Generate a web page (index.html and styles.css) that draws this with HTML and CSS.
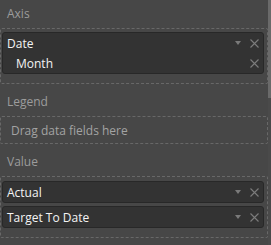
FILE: index.html
```html
<!DOCTYPE html>
<html>
<head>
<meta charset="utf-8">
<link rel="stylesheet" href="styles.css">
</head>
<body>
<div class="pane">
  <div class="wells">
    <section class="well">
      <div class="well-label">Axis</div>
      <div class="drop drop-axis">
        <div class="card">
          <div class="row">
            <span class="name">Date</span>
            <span class="caret"></span>
            <svg class="x" viewBox="0 0 9 9" width="9" height="9"><path d="M0.5 0.5L8.5 8.5M8.5 0.5L0.5 8.5"/></svg>
          </div>
          <div class="row sub">
            <span class="name">Month</span>
            <svg class="x" viewBox="0 0 9 9" width="9" height="9"><path d="M0.5 0.5L8.5 8.5M8.5 0.5L0.5 8.5"/></svg>
          </div>
        </div>
      </div>
    </section>
    <section class="well">
      <div class="well-label">Legend</div>
      <div class="drop drop-empty">
        <span class="hint">Drag data fields here</span>
      </div>
    </section>
    <section class="well">
      <div class="well-label">Value</div>
      <div class="drop drop-value">
        <div class="card">
          <div class="row">
            <span class="name">Actual</span>
            <span class="caret"></span>
            <svg class="x" viewBox="0 0 9 9" width="9" height="9"><path d="M0.5 0.5L8.5 8.5M8.5 0.5L0.5 8.5"/></svg>
          </div>
        </div>
        <div class="card">
          <div class="row">
            <span class="name">Target To Date</span>
            <span class="caret"></span>
            <svg class="x" viewBox="0 0 9 9" width="9" height="9"><path d="M0.5 0.5L8.5 8.5M8.5 0.5L0.5 8.5"/></svg>
          </div>
        </div>
      </div>
    </section>
  </div>
  <div class="scrollbar"><div class="thumb"></div></div>
</div>
</body>
</html>
```
FILE: styles.css
```css
html, body {
  margin: 0;
  padding: 0;
  background: #474747;
}
body {
  width: 271px;
  height: 245px;
  overflow: hidden;
  font-family: "Open Sans", "Noto Sans", sans-serif;
  font-size: 12px;
}
.pane {
  display: flex;
  height: 245px;
}
.wells {
  width: 268px;
  display: flex;
  flex-direction: column;
  gap: 4px;
}
.well-label {
  height: 28px;
  line-height: 28px;
  padding-left: 7px;
  color: #9c9c9c;
}
.drop {
  border: 1px dashed #686868;
  border-radius: 2px;
  box-sizing: border-box;
  width: 268px;
}
.drop-axis {
  height: 56px;
  padding: 3px 3px 0 1px;
}
.drop-empty {
  height: 28px;
  display: flex;
  align-items: center;
  padding-left: 10px;
}
.hint {
  color: #a3a3a3;
}
.drop-value {
  height: 62px;
  padding: 4px 3px 0 1px;
  display: flex;
  flex-direction: column;
  gap: 3px;
}
.card {
  background: #333333;
  border: 1px solid #282828;
  border-radius: 3px;
}
.row {
  height: 20px;
  display: flex;
  align-items: center;
  padding-left: 4px;
  padding-right: 4px;
}
.row.sub {
  padding-left: 13px;
}
.name {
  flex: 1;
  color: #f4f4f4;
}
.caret {
  width: 0;
  height: 0;
  border-left: 3.5px solid transparent;
  border-right: 3.5px solid transparent;
  border-top: 4px solid #7a7a7a;
  margin-right: 9px;
}
.x {
  stroke: #7c7c7c;
  stroke-width: 1.1;
  fill: none;
}
.scrollbar {
  width: 3px;
  height: 245px;
  background: #4a4a4a;
}
.thumb {
  height: 98px;
  background: #6a6a6a;
}
```
